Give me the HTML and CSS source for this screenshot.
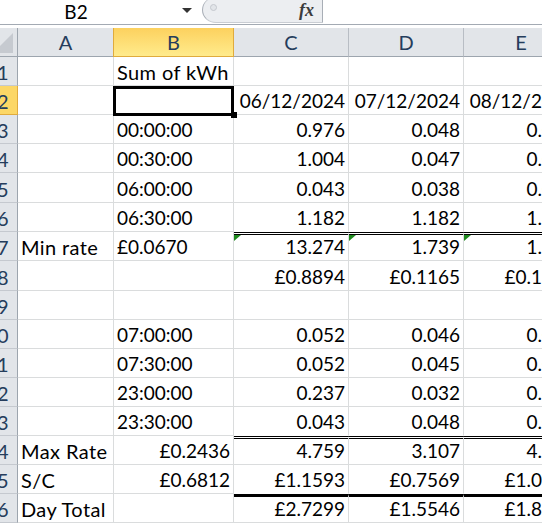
FILE: index.html
```html
<!DOCTYPE html>
<html lang="en">
<head>
<meta charset="utf-8">
<title>Sheet</title>
<link rel="stylesheet" href="styles.css">
</head>
<body>
<div class="fbar">
  <div class="namebox"><span class="ref">B2</span><span class="drop"></span></div>
  <div class="fxbox"><span class="dot"></span><span class="fx">fx</span></div>
  <div class="finput"></div>
</div>
<div class="gap"></div>
<div class="sheet">
  <div class="corner"><svg width="17" height="28" viewBox="0 0 17 28"><polygon points="-7,25 13,25 13,5" fill="#c6cad0"/></svg></div>
  <div class="ch">A</div><div class="ch on">B</div><div class="ch">C</div><div class="ch">D</div><div class="ch">E</div>

  <div class="rh"><span>1</span></div><div class="c"></div><div class="c t">Sum of kWh</div><div class="c"></div><div class="c"></div><div class="c"></div>
  <div class="rh on"><span>2</span></div><div class="c"></div><div class="c"></div><div class="c r">06/12/2024</div><div class="c r">07/12/2024</div><div class="c r">08/12/2024</div>
  <div class="rh"><span>3</span></div><div class="c"></div><div class="c">00:00:00</div><div class="c r">0.976</div><div class="c r">0.048</div><div class="c r">0.051</div>
  <div class="rh"><span>4</span></div><div class="c"></div><div class="c">00:30:00</div><div class="c r">1.004</div><div class="c r">0.047</div><div class="c r">0.049</div>
  <div class="rh"><span>5</span></div><div class="c"></div><div class="c">06:00:00</div><div class="c r">0.043</div><div class="c r">0.038</div><div class="c r">0.040</div>
  <div class="rh"><span>6</span></div><div class="c"></div><div class="c">06:30:00</div><div class="c r nb">1.182</div><div class="c r nb">1.182</div><div class="c r nb">1.182</div>
  <div class="rh"><span>7</span></div><div class="c t">Min rate</div><div class="c">£0.0670</div><div class="c r dbl tri">13.274</div><div class="c r dbl tri">1.739</div><div class="c r dbl tri">1.370</div>
  <div class="rh"><span>8</span></div><div class="c"></div><div class="c"></div><div class="c r">£0.8894</div><div class="c r">£0.1165</div><div class="c r">£0.1170</div>
  <div class="rh"><span>9</span></div><div class="c"></div><div class="c"></div><div class="c"></div><div class="c"></div><div class="c"></div>
  <div class="rh"><span>0</span></div><div class="c"></div><div class="c">07:00:00</div><div class="c r">0.052</div><div class="c r">0.046</div><div class="c r">0.048</div>
  <div class="rh"><span>1</span></div><div class="c"></div><div class="c">07:30:00</div><div class="c r">0.052</div><div class="c r">0.045</div><div class="c r">0.047</div>
  <div class="rh"><span>2</span></div><div class="c"></div><div class="c">23:00:00</div><div class="c r">0.237</div><div class="c r">0.032</div><div class="c r">0.041</div>
  <div class="rh"><span>3</span></div><div class="c"></div><div class="c">23:30:00</div><div class="c r nb">0.043</div><div class="c r nb">0.048</div><div class="c r nb">0.044</div>
  <div class="rh"><span>4</span></div><div class="c t">Max Rate</div><div class="c r">£0.2436</div><div class="c r dbl">4.759</div><div class="c r dbl">3.107</div><div class="c r dbl">4.262</div>
  <div class="rh"><span>5</span></div><div class="c t">S/C</div><div class="c r">£0.6812</div><div class="c r nb">£1.1593</div><div class="c r nb">£0.7569</div><div class="c r nb">£1.0382</div>
  <div class="rh"><span>6</span></div><div class="c t">Day Total</div><div class="c"></div><div class="c r thick">£2.7299</div><div class="c r thick">£1.5546</div><div class="c r thick">£1.8364</div>

  <div class="sel"><span class="handle"></span></div>
</div>
</body>
</html>
```

FILE: styles.css
```css
* { box-sizing: border-box; }
html, body { margin: 0; padding: 0; }
body {
  width: 542px;
  height: 528px;
  overflow: hidden;
  background: #fff;
  font-family: Lato, "Noto Sans", sans-serif;
  color: #000;
}

/* formula bar */
.fbar {
  display: flex;
  height: 25px;
  border-bottom: 1px solid #a3aab3;
}
.namebox {
  width: 202px;
  display: flex;
  align-items: center;
}
.ref {
  width: 152px;
  text-align: center;
  font-size: 19px;
  line-height: 24px;
}
.drop {
  width: 0;
  height: 0;
  margin-left: 30px;
  margin-top: -4px;
  border-left: 5px solid transparent;
  border-right: 5px solid transparent;
  border-top: 5px solid #333;
}
.fxbox {
  width: 121px;
  height: 26px;
  margin-top: -3px;
  display: flex;
  align-items: center;
  padding-left: 7px;
  padding-right: 8px;
  background: #eceef1;
  border-left: 1px solid #a8aeb6;
  border-right: 1px solid #a8aeb6;
  border-bottom: 1px solid #c9cdd3;
  border-radius: 14px 0 0 14px / 13px 0 0 13px;
}
.dot {
  width: 7px;
  height: 7px;
  border-radius: 50%;
  border: 1px solid #c4c8ce;
  background: #e2e5e9;
  margin-top: -4px;
}
.fx {
  margin-left: auto;
  font-family: "Liberation Serif", serif;
  font-style: italic;
  font-weight: bold;
  font-size: 18px;
  color: #3c3c3c;
  margin-top: 2px;
}
.finput { flex: 1; background: #fff; }
.gap { height: 3px; }

/* sheet grid */
.sheet {
  position: relative;
  width: 579px;
  display: grid;
  grid-template-columns: 18px 96px 120px 115px 115px 115px;
  grid-template-rows: 29px 29px 29px 29px 29px 30px 29px 29px 30px 29px 29px 29px 29px 29px 29px 29px 29px;
  font-size: 19px;
}
.corner {
  background: #e2e5e9;
  border-right: 1px solid #9da5ae;
  border-bottom: 1px solid #9da5ae;
  overflow: hidden;
}
.corner svg { display: block; }
.ch {
  background: #e2e5e9;
  border-right: 1px solid #b8bdc4;
  border-bottom: 1px solid #9da5ae;
  color: #253d5c;
  text-align: center;
  line-height: 28px;
  font-size: 20px;
}
.ch.on {
  background: linear-gradient(#fcd15e, #ffeb8c);
  border-right-color: #e0ab3d;
  border-bottom-color: #e0ab3d;
  box-shadow: -1px 0 0 #e0ab3d;
}
.rh {
  background: #e2e5e9;
  border-right: 1px solid #9da5ae;
  border-bottom: 1px solid #c5c9cf;
  color: #253d5c;
  overflow: hidden;
  white-space: nowrap;
  text-indent: -3px;
  display: flex;
  align-items: flex-end;
  padding-bottom: 1px;
  line-height: 1.2;
  font-size: 20px;
}
.rh.on {
  background: #fcd766;
  border-right-color: #e0ab3d;
  border-bottom-color: #e0ab3d;
}
.c {
  position: relative;
  border-right: 1px solid #dadcdd;
  border-bottom: 1px solid #dadcdd;
  padding: 0 3px 1px 3px;
  white-space: nowrap;
  overflow: hidden;
  display: flex;
  align-items: flex-end;
  line-height: 1.2;
}
.c.t {
  font-size: 20px;
  letter-spacing: 0.4px;
}
.c.r { justify-content: flex-end; }
.c.nb { border-bottom-color: #fff; }
.c.dbl { border-top: 3px double #000; }
.c.thick { border-top: 3px solid #000; }
.c.tri::before {
  content: "";
  position: absolute;
  left: 0;
  top: 0;
  width: 0;
  height: 0;
  border-top: 6px solid #1f8a1f;
  border-right: 7px solid transparent;
}

/* active cell */
.sel {
  position: absolute;
  left: 113px;
  top: 58px;
  width: 121px;
  height: 30px;
  border: 3px solid #000;
}
.handle {
  position: absolute;
  right: -6px;
  bottom: -5px;
  width: 6px;
  height: 6px;
  background: #000;
}
```
